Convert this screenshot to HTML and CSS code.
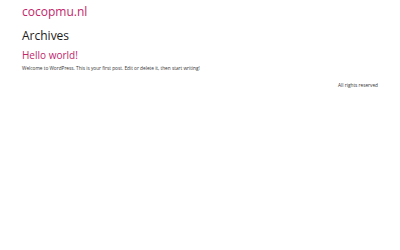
FILE: index.html
```html
<!DOCTYPE html>
<html lang="en">
<head>
<meta charset="utf-8">
<title>Archives – cocopmu.nl</title>
<link rel="stylesheet" href="styles.css">
</head>
<body>
<div class="site">
  <header class="site-header">
    <a class="site-title" href="#">cocopmu.nl</a>
  </header>
  <main class="content">
    <h1 class="page-title">Archives</h1>
    <article class="post">
      <h2 class="entry-title"><a href="#">Hello world!</a></h2>
      <p class="entry-content">Welcome to WordPress. This is your first post. Edit or delete it, then start writing!</p>
    </article>
  </main>
  <footer class="site-footer">All rights reserved</footer>
</div>
</body>
</html>
```
FILE: styles.css
```css
html, body {
  margin: 0;
  padding: 0;
  background: #fff;
}
body {
  font-family: "Open Sans", "Noto Sans", sans-serif;
  color: #1a1a1a;
}
.site {
  padding: 0 22px;
}
.site-header {
  padding-top: 3px;
  height: 20px;
}
.site-title {
  display: block;
  font-size: 12px;
  line-height: 18px;
  color: #c2256b;
  text-decoration: none;
}
.page-title {
  margin: 4px 0 0;
  font-size: 12px;
  font-weight: 400;
  line-height: 17px;
}
.entry-title {
  margin: 4px 0 0;
  font-size: 10px;
  font-weight: 400;
  line-height: 14px;
}
.entry-title a {
  color: #c2256b;
  text-decoration: none;
}
.entry-content {
  margin: 2.5px 0 0;
  font-size: 4.75px;
  line-height: 7px;
  color: #333;
}
.site-footer {
  margin-top: 10px;
  text-align: right;
  font-size: 4.75px;
  line-height: 7px;
  color: #333;
}
```
